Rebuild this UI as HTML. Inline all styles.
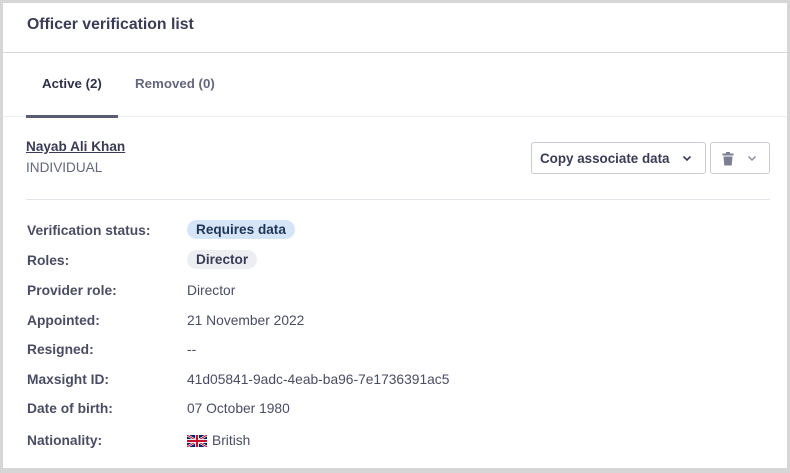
<!DOCTYPE html>
<html><head><style>
*{margin:0;padding:0;box-sizing:border-box}
body{width:790px;height:473px;background:#d6d6d6;font-family:"Liberation Sans",sans-serif;position:relative;overflow:hidden;color:#3d3f5a}
.card{position:absolute;left:3px;top:3px;width:784px;height:465px;background:#fff}
.a{position:absolute;white-space:nowrap}
.h{left:24px;top:13px;font-size:15.8px;font-weight:bold;color:#3a3c55}
.hl{position:absolute;left:0;right:0;top:49px;height:1px;background:#d8d9e0}
.tl{position:absolute;left:0;right:0;top:113px;height:1px;background:#eceef2}
.ul{position:absolute;left:23px;top:112px;width:92px;height:3px;background:#5a5c74}
.tab{font-size:13.3px;font-weight:bold;top:73px}
.dv{position:absolute;left:23px;width:744px;top:196px;height:1px;background:#e3e4ea}
.lab{left:24px;font-size:13.8px;font-weight:bold;color:#4a4c63}
.val{left:184px;font-size:13.8px;color:#4a4c63}
.pill{left:184px;font-size:13.6px;font-weight:bold;padding:2px 9px;border-radius:10px}
.btn{position:absolute;top:139px;height:32px;border:1px solid #c9cad3;border-radius:3px;background:#fff}
</style></head><body>
<div class="card">
<div class="a h">Officer verification list</div>
<div class="hl"></div>
<div class="a tab" style="left:39px;color:#2f3149">Active (2)</div>
<div class="a tab" style="left:132px;color:#64667c">Removed (0)</div>
<div class="tl"></div><div class="ul"></div>
<div class="a" style="left:23px;top:136px;font-size:13.6px;font-weight:bold;text-decoration:underline;color:#3a3c55">Nayab Ali Khan</div>
<div class="a" style="left:23px;top:157px;font-size:13.6px;color:#64667c">INDIVIDUAL</div>
<div class="btn" style="left:528px;width:175px"><span class="a" style="left:8px;top:8px;font-size:13.4px;font-weight:bold;color:#3a3c55">Copy associate data</span>
<svg class="a" style="left:150px;top:12px" width="10" height="7" viewBox="0 0 10 7"><path d="M1.5 1.5L5 5 8.5 1.5" stroke="#3a3c55" stroke-width="1.6" fill="none"/></svg></div>
<div class="btn" style="left:707px;width:60px">
<svg class="a" style="left:11px;top:9px" width="12" height="14" viewBox="0 0 12 14"><rect x="0.5" y="1.5" width="11" height="2" fill="#7d7f95"/><rect x="4" y="0" width="4" height="2" fill="#7d7f95"/><path d="M1.5 4.5h9l-.8 9h-7.4z" fill="#7d7f95"/></svg>
<svg class="a" style="left:36px;top:12px" width="10" height="7" viewBox="0 0 10 7"><path d="M1.5 1.5L5 5 8.5 1.5" stroke="#8d8fa2" stroke-width="1.5" fill="none"/></svg></div>
<div class="dv"></div>
<div class="a lab" style="top:220px">Verification status:</div>
<div class="a pill" style="top:217px;background:#d5e4f7;color:#1f3556">Requires data</div>
<div class="a lab" style="top:250px">Roles:</div>
<div class="a pill" style="top:247px;background:#eceef2;color:#3a3c55">Director</div>
<div class="a lab" style="top:280px">Provider role:</div><div class="a val" style="top:280px">Director</div>
<div class="a lab" style="top:310px">Appointed:</div><div class="a val" style="top:310px">21 November 2022</div>
<div class="a lab" style="top:339px">Resigned:</div><div class="a val" style="top:339px">--</div>
<div class="a lab" style="top:369px">Maxsight ID:</div><div class="a val" style="top:369px">41d05841-9adc-4eab-ba96-7e1736391ac5</div>
<div class="a lab" style="top:398px">Date of birth:</div><div class="a val" style="top:398px">07 October 1980</div>
<div class="a lab" style="top:430px">Nationality:</div>
<svg class="a" style="left:184px;top:432px" width="20" height="12" viewBox="0 0 60 36"><rect width="60" height="36" fill="#012169"/><path d="M0 0L60 36M60 0L0 36" stroke="#fff" stroke-width="7"/><path d="M0 0L60 36M60 0L0 36" stroke="#C8102E" stroke-width="3"/><path d="M30 0v36M0 18h60" stroke="#fff" stroke-width="11"/><path d="M30 0v36M0 18h60" stroke="#C8102E" stroke-width="6"/></svg>
<div class="a val" style="left:209px;top:430px">British</div>
</div>
</body></html>
